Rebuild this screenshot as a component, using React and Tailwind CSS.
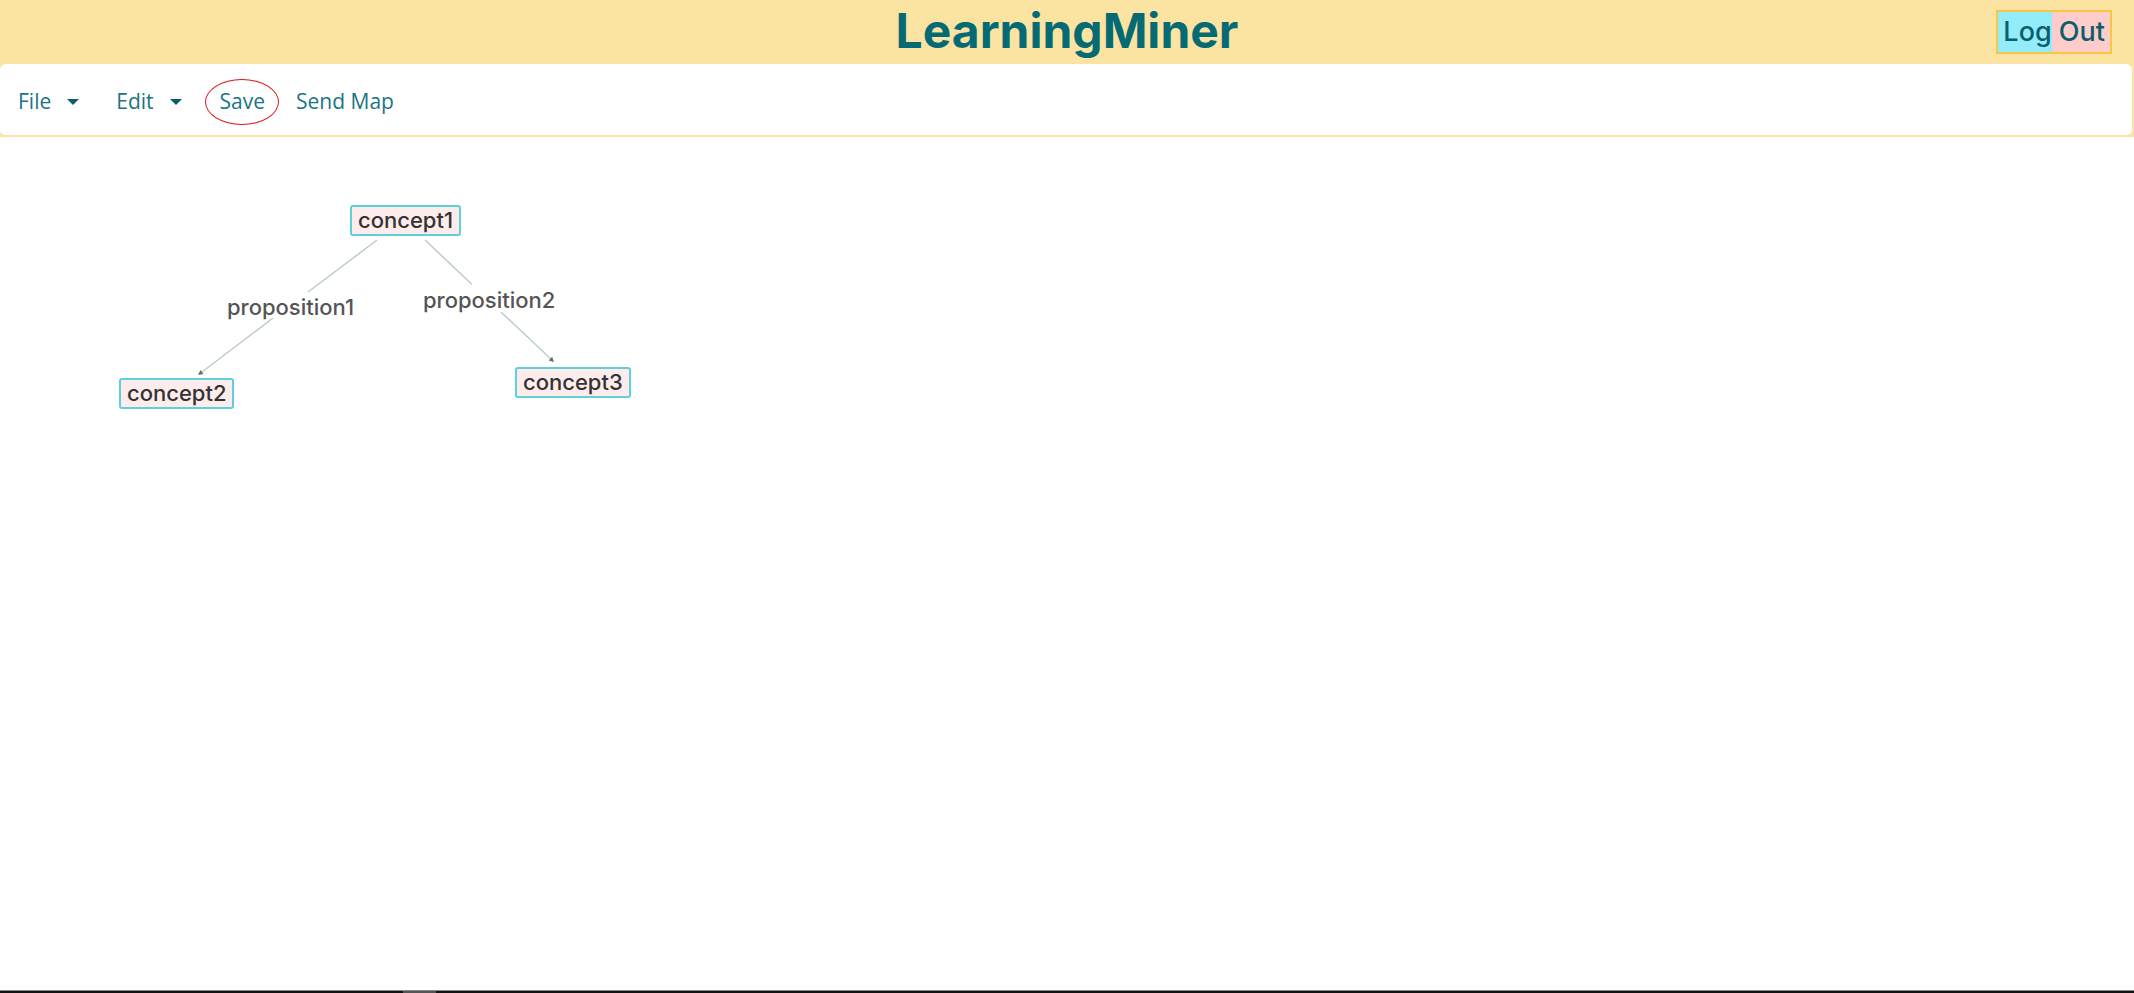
import React from "react";

const sans = { fontFamily: "Inter, 'Noto Sans', sans-serif" };
const menuFont = { fontFamily: "'Open Sans', 'Noto Sans', sans-serif" };

function Caret() {
  return (
    <svg width="14" height="8" viewBox="0 0 14 8" className="ml-[15px]">
      <path d="M1 1 L13 1 L7 7 Z" fill="#0b5d69" />
    </svg>
  );
}

function Node({ left, top, children }) {
  return (
    <div
      className="absolute rounded-[3px] border-2 border-[#5dd0dc] bg-[#fdeceb] px-[6px] text-[22px] leading-[27px] font-medium text-[#333333]"
      style={{ ...sans, left, top }}
    >
      {children}
    </div>
  );
}

function Label({ left, top, children }) {
  return (
    <div
      className="absolute text-[22px] leading-[26px] font-medium text-[#555555]"
      style={{ ...sans, left, top }}
    >
      {children}
    </div>
  );
}

export default function App() {
  return (
    <div className="relative flex h-[993px] w-full flex-col overflow-hidden bg-white">
      <div className="bg-[#fbe3a1]">
        <div className="grid h-[64px] grid-cols-[1fr_auto_1fr] items-center">
          <div />
          <div
            className="text-[48px] leading-none font-bold text-[#056a74] pb-[2px]"
            style={sans}
          >
            LearningMiner
          </div>
          <div className="flex justify-end pr-[22px]">
            <button
              className="flex h-[44px] items-center border-2 border-[#f8c545] text-[27px] font-medium text-[#0b5f6b]"
              style={sans}
            >
              <span className="flex h-full items-center bg-[#92ecf9] pl-[5px]">Log</span>
              <span className="flex h-full items-center bg-[#ffcccc] pr-[5px] whitespace-pre"> Out</span>
            </button>
          </div>
        </div>
        <div
          className="flex h-[73px] items-center rounded-[6px] border-b-2 border-[#fbe3a1] bg-white pl-[18px] pt-[4px] mr-[2px] text-[21px] text-[#1a7585]"
          style={menuFont}
        >
          <div className="flex items-center">
            <span>File</span>
            <Caret />
          </div>
          <div className="ml-[36px] flex items-center">
            <span>Edit</span>
            <Caret />
          </div>
          <div className="relative ml-[37px] flex items-center">
            <span>Save</span>
            <div className="absolute left-1/2 top-1/2 h-[46px] w-[74px] -translate-x-1/2 -translate-y-1/2 rounded-[50%] border-[1.5px] border-[#e0141c]" />
          </div>
          <div className="ml-[31px]">Send Map</div>
        </div>
      </div>

      <div className="relative flex-1 bg-white">
        <svg className="absolute left-0 top-0" width="700" height="300">
          <g stroke="#bccdcc" strokeWidth="1.5" fill="none">
            <line x1="377" y1="103" x2="308" y2="155" />
            <line x1="273" y1="181" x2="200" y2="236.5" />
            <line x1="425" y1="103" x2="472" y2="147.5" />
            <line x1="501" y1="175" x2="552" y2="223" />
          </g>
          <path d="M198 238 L203.5 237 L200.5 233 Z" fill="#5f6f6f" />
          <path d="M554 225 L548.7 223.4 L552.1 219.8 Z" fill="#5f6f6f" />
        </svg>
        <Node left={350} top={68}>concept1</Node>
        <Node left={119} top={241}>concept2</Node>
        <Node left={515} top={230}>concept3</Node>
        <Label left={227} top={157}>proposition1</Label>
        <Label left={423} top={150}>proposition2</Label>
      </div>

      <div className="h-[3px] border-t border-[#8a8a8a] bg-[#111111] relative">
        <div className="absolute left-[403px] top-0 h-full w-[33px] bg-[#555555]" />
      </div>
    </div>
  );
}
